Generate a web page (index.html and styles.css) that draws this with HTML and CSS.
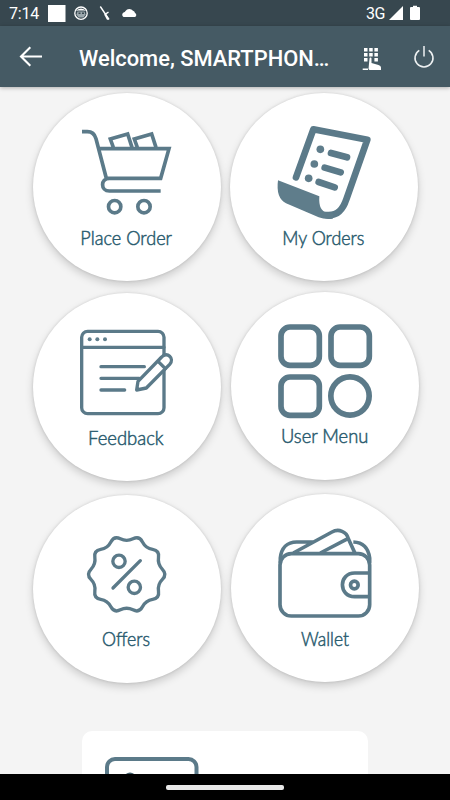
FILE: index.html
```html
<!DOCTYPE html>
<html lang="en">
<head>
<meta charset="utf-8">
<meta name="viewport" content="width=device-width">
<title>Welcome</title>
<link rel="stylesheet" href="styles.css">
</head>
<body>
<div class="status">
  <span class="clock">7:14</span>
  <svg class="status-left" viewBox="0 0 92 26">
    <rect x="0" y="5" width="17.500" height="17" fill="#fff"/>
    <circle cx="33" cy="13.200" r="6.200" fill="none" stroke="#fff" stroke-width="1.300"/>
    <path d="M27.500 11Q33 6 38.500 11L36 10.500H30Z" fill="#fff"/>
    <path d="M29.500 11.500h7l1 3-2 3h-5l-2-3z" fill="#9ca8ad"/>
    <path d="M30.500 12.500h2v1.500h-2zm3.500 0h2v1.500h-2zM31 16h4" fill="#37474f"/>
    <path d="M52.300 6.500 61 19.500M57.500 14l3-1.800" stroke="#fff" stroke-width="1.400"/>
    <path d="M57 14l3 5.500" stroke="#fff" stroke-width="2"/>
    <path d="M75.500 17a2.600 2.600 0 0 1 0-4.500Q77 12 77.500 11a4.600 4.600 0 0 1 7.500-.2 3 3 0 0 1 2 2.200 2.200 2.200 0 0 1 0 4z" fill="#fff"/>
  </svg>
  <span class="network">3G</span>
  <svg class="status-right" viewBox="0 0 32 26">
    <path d="M14 6V20H0z" fill="#fff"/>
    <path d="M21 8q0-1 1-1h2V5.700h4V7h2q1 0 1 1v11q0 1-1 1h-8q-1 0-1-1z" fill="#fff"/>
  </svg>
</div>
<header class="bar">
  <svg class="back" viewBox="0 0 24 21"><path d="M23 10.500H2M11.300 1.300 2 10.500l9.300 9.200" fill="none" stroke="#fff" stroke-width="2.100"/></svg>
  <h1 class="title">Welcome, SMARTPHON…</h1>
  <svg class="keypad" viewBox="0 0 20 24">
    <path d="M2 1h3.500v3.500H2zm5.200 0h3.500v3.500H7.200zm5.200 0h3.500v3.500h-3.500zM2 6h3.500v3.500H2zm5.200 0h3.500v3.500H7.200zm5.200 0h3.500v3.500h-3.500zM2 11h3.500v3.500H2zm10.400 0h3.500v3.500h-3.500z" fill="#fff"/>
    <path d="M7.500 11.500q0-1 1-1t1 1V16l7 2q2.500.7 2.500 2.500V23H7.500l-1-1zM.7 21.500h5.300V23H.7z" fill="#fff"/>
  </svg>
  <svg class="power" viewBox="0 0 22 24"><path d="M11 1v10.500M6.300 5.300a9 9 0 1 0 9.400 0" fill="none" stroke="#eef1f2" stroke-width="1.500"/></svg>
</header>
<main class="content">
  <div class="row row-first">
    <a class="tile">
      <svg class="art" viewBox="24 16 564 564">
        <g class="line" stroke-width="11">
          <path d="M171 132h16q20 0 26 21l31 119h163l25-89H225M407 310H253c-27 0-27-38 0-38"/>
          <path d="M265 179l-9-25 52-15 13 40M337 179l-9-25 52-15 13 40"/>
          <circle cx="269" cy="357" r="18.500"/><circle cx="357" cy="357" r="18.500"/>
        </g>
        <text class="label" x="166" y="471" textLength="275" lengthAdjust="spacingAndGlyphs">Place Order</text>
      </svg>
    </a>
    <a class="tile">
      <svg class="art" viewBox="14 16 564 564">
        <g class="line round">
          <path stroke-width="20" d="M212 269 264 125 426 156 363 335Q346 388 302 382"/>
          <path stroke-width="20" d="M317 196l48 13M298 240l48 14M280 283l48 16"/>
        </g>
        <g class="solid">
          <circle cx="285" cy="185" r="11.500"/><circle cx="267" cy="229" r="11.500"/><circle cx="250" cy="272" r="11.500"/>
          <path d="M158 278 282 326Q279 371 305 374L325 379 322 393Q299 396 280 389L182 347Q151 331 158 278Z"/>
        </g>
        <text class="label" x="171" y="471" textLength="246" lengthAdjust="spacingAndGlyphs">My Orders</text>
      </svg>
    </a>
  </div>
  <div class="row row-second">
    <a class="tile">
      <svg class="art" viewBox="24 16 564 564">
        <g class="line round" stroke-width="10">
          <rect x="170" y="131" width="247" height="247" rx="18"/>
          <path d="M170 179h247M228 237h130M228 272h115M228 307h71"/>
          <path fill="#fff" d="M335 307 339 281 410 208C426 190 450 212 434 230L364 301Z"/>
          <path d="M400 222l21 21"/>
        </g>
        <g class="solid"><circle cx="194" cy="155" r="6"/><circle cx="217" cy="155" r="6"/><circle cx="240" cy="155" r="6"/></g>
        <text class="label" x="189" y="471" textLength="227" lengthAdjust="spacingAndGlyphs">Feedback</text>
      </svg>
    </a>
    <a class="tile tile-raised">
      <svg class="art" viewBox="18 12 564 564">
        <g class="line" stroke-width="17">
          <rect x="168" y="117" width="115" height="115" rx="27"/>
          <rect x="318" y="117" width="115" height="115" rx="27"/>
          <rect x="168" y="267" width="115" height="115" rx="27"/>
          <circle cx="375" cy="324" r="57.500"/>
        </g>
        <text class="label" x="168" y="466" textLength="262" lengthAdjust="spacingAndGlyphs">User Menu</text>
      </svg>
    </a>
  </div>
  <div class="row row-third">
    <a class="tile">
      <svg class="art" viewBox="24 21 564 564">
        <g class="line round" stroke-width="10">
          <path transform="translate(305 259)" d="M-18.900-106.500Q0-97 18.900-106.500Q37.700-116 47.400-97.300Q57-78.500 77.900-75.100Q98.700-71.700 95.500-50.900Q92.300-30 107.200-15Q122 0 107.200 15Q92.300 30 95.500 50.900Q98.700 71.700 77.900 75.100Q57 78.500 47.400 97.300Q37.700 116 18.900 106.500Q0 97-18.900 106.500Q-37.700 116-47.400 97.300Q-57 78.500-77.900 75.100Q-98.700 71.700-95.500 50.900Q-92.300 30-107.200 15Q-122 0-107.200-15Q-92.300-30-95.500-50.900Q-98.700-71.700-77.900-75.100Q-57-78.500-47.400-97.300Q-37.700-116-18.900-106.500Z"/>
          <circle cx="282" cy="220" r="18.500"/><circle cx="328" cy="298" r="18.500"/>
          <path d="M264 300l82-82"/>
        </g>
        <text class="label" x="231" y="475" textLength="144" lengthAdjust="spacingAndGlyphs">Offers</text>
      </svg>
    </a>
    <a class="tile tile-raised">
      <svg class="art" viewBox="18 16 564 564">
        <g class="line" stroke-width="11">
          <rect x="165" y="195" width="269" height="187" rx="34"/>
          <path d="M166 222v-14c3-30 20-48 49-48h51M434 222v-14c-4-30-21-47-49-48M205 193 321 130c20-11 44-1 49 20l20 44M286 193l84-44"/>
          <path d="M434 253h-45c-49 0-49 71 0 71h45"/>
          <circle cx="388" cy="289" r="11.500"/>
        </g>
        <text class="label" x="228" y="471" textLength="144" lengthAdjust="spacingAndGlyphs">Wallet</text>
      </svg>
    </a>
  </div>
  <section class="panel">
    <svg class="card-art" viewBox="0 0 96 60"><rect x="2" y="2" width="89.500" height="70" rx="8" class="line" stroke-width="4"/><circle cx="25" cy="22" r="6.500" fill="#3f5b66"/></svg>
  </section>
</main>
<footer class="nav"><span class="handle"></span></footer>
</body>
</html>
```

FILE: styles.css
```css
* { box-sizing: border-box; }
body {
  margin: 0;
  width: 450px;
  height: 800px;
  display: flex;
  flex-direction: column;
  overflow: hidden;
  background: #f4f4f4;
  font-family: Roboto, sans-serif;
  color: #fff;
}
svg { display: block; flex: none; }
.status {
  height: 26px;
  flex: none;
  display: flex;
  align-items: center;
  padding: 0 29px 0 9px;
  background: #37474f;
}
.clock { width: 39px; padding-top: 2px; font-size: 16px; line-height: 26px; letter-spacing: -0.2px; }
.status-left { width: 92px; height: 26px; }
.network { margin-left: auto; margin-right: 4px; padding-top: 1px; font-size: 16px; line-height: 26px; letter-spacing: -0.4px; }
.status-right { width: 32px; height: 26px; }
.bar {
  height: 61px;
  flex: none;
  display: flex;
  align-items: center;
  padding: 0 15px 0 19px;
  background: #455a64;
  box-shadow: 0 1px 4px rgba(0, 0, 0, 0.28);
  z-index: 1;
}
.back { width: 24px; height: 21px; }
.title {
  margin: 4px 0 0 36px;
  width: 284px;
  font-size: 21.900px;
  font-weight: 500;
  line-height: 30px;
  white-space: nowrap;
}
.keypad { width: 20px; height: 24px; margin: 4px 0 0 -1px; }
.power { width: 22px; height: 24px; margin: 1px 0 0 auto; }
.content { flex: 1; min-height: 0; overflow: hidden; padding-top: 6px; }
.row { display: flex; align-items: flex-start; padding-left: 33px; }
.row-first { gap: 9px; height: 200px; }
.row-second { gap: 10px; height: 202px; }
.row-third { gap: 10px; height: 236px; }
.tile {
  width: 188px;
  height: 188px;
  flex: none;
  border-radius: 50%;
  background: #fff;
  box-shadow: 0 4px 8px rgba(0, 0, 0, 0.17), 0 0 3px rgba(0, 0, 0, 0.13);
}
.tile-raised { margin-top: -1px; }
.art { width: 188px; height: 188px; }
.line { fill: none; stroke: #5b7a89; }
.round { stroke-linecap: round; stroke-linejoin: round; }
.solid { fill: #5f7d8b; }
.label { font: 300 56px Lato, sans-serif; fill: #2b5c6f; stroke: #2b5c6f; stroke-width: 1.500px; }
.panel {
  width: 286px;
  height: 120px;
  margin-left: 82px;
  padding: 26px 0 0 23px;
  border-radius: 10px;
  background: #fff;
}
.card-art { width: 96px; height: 60px; }
.nav {
  height: 26px;
  flex: none;
  display: flex;
  justify-content: center;
  align-items: center;
  background: #000;
}
.handle { width: 118px; height: 5px; border-radius: 2px; background: #e8e8e8; }
```
